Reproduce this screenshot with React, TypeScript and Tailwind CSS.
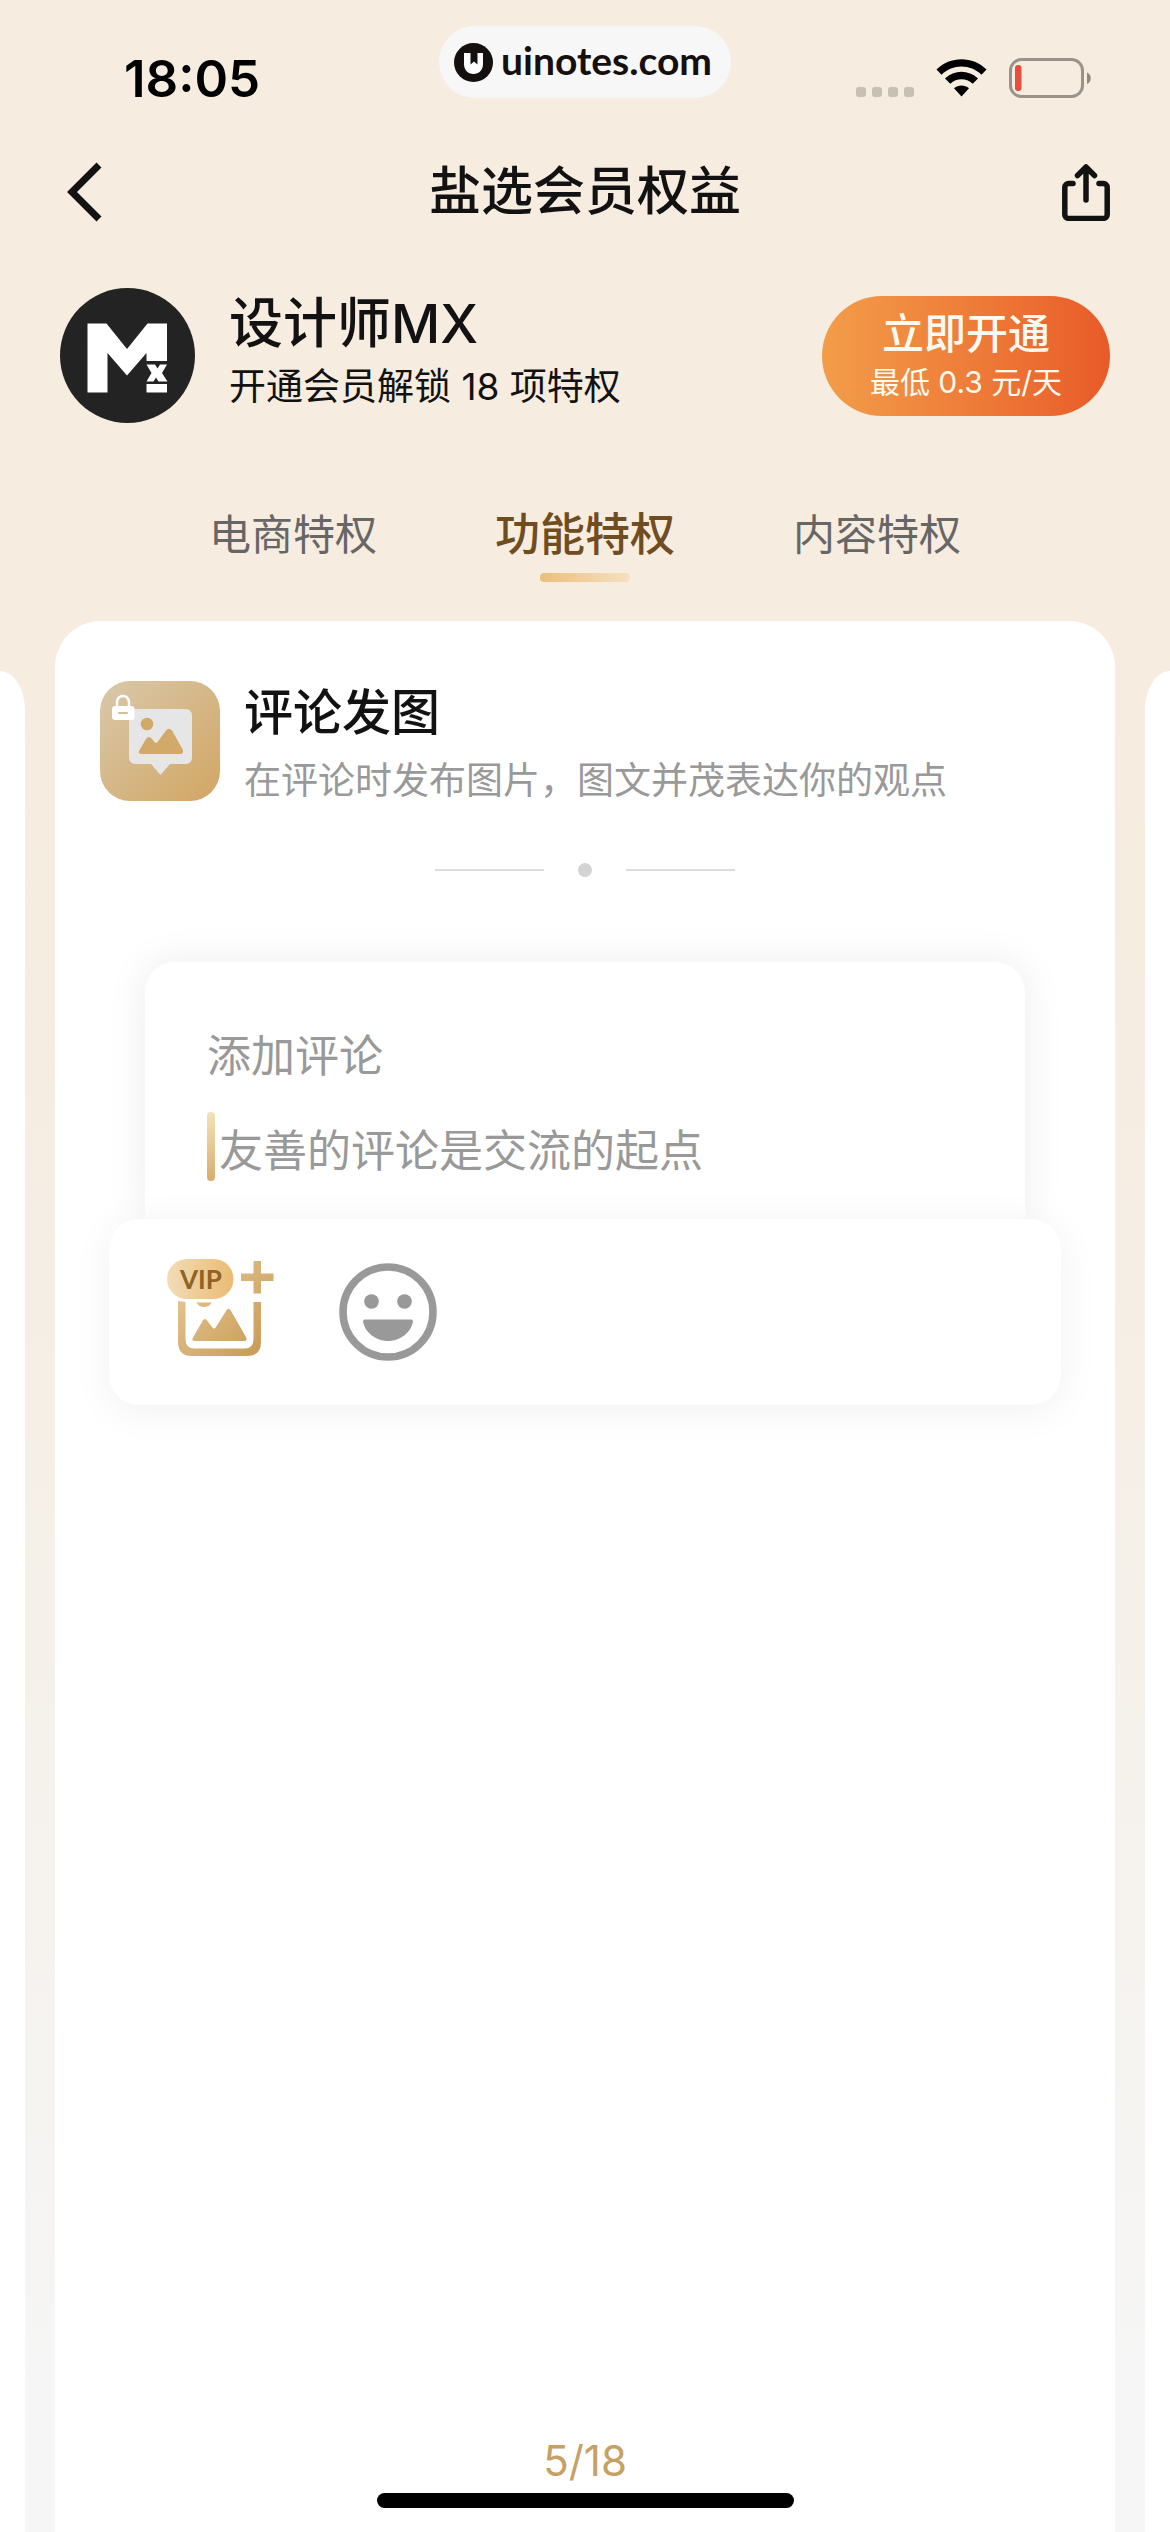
import React from 'react';

const tabs = [
  { label: '电商特权', active: false },
  { label: '功能特权', active: true },
  { label: '内容特权', active: false },
];

function StatusBar() {
  return (
    <div className="grid grid-cols-[1fr_auto_1fr] items-start pt-[26px]">
      <div className="flex h-[104px] items-center pl-[124px]">
        <span className="text-[51px] font-semibold leading-none text-black">18:05</span>
      </div>

      {/* Site badge */}
      <div className="flex h-[72px] w-[292px] items-center gap-2 rounded-full bg-[#f7f7f7] pl-[15px]">
        <svg className="h-[39px] w-[39px] shrink-0" viewBox="0 0 39 39">
          <circle cx="19.5" cy="19.5" r="19.5" fill="#15100f" />
          <path d="M10 10h6.500v11.500l3.500-3 3.500 3V10H29v11c0 6-4 10-9.500 10S10 27 10 21z" fill="#fff" />
        </svg>
        <span className="pb-1 font-['Lato'] text-[39px] font-bold leading-none text-[#15100f]">uinotes.com</span>
      </div>

      {/* Signal, wifi, battery */}
      <div className="flex h-[104px] items-center justify-end pr-[78px]">
        <div className="mt-7 flex gap-[6px]">
          <span className="h-[10px] w-[10px] rounded-[3px] bg-[#c6bfb2]" />
          <span className="h-[10px] w-[10px] rounded-[3px] bg-[#c6bfb2]" />
          <span className="h-[10px] w-[10px] rounded-[3px] bg-[#c6bfb2]" />
          <span className="h-[10px] w-[10px] rounded-[3px] bg-[#c6bfb2]" />
        </div>
        <svg className="ml-[22px] h-[38px] w-[51px]" viewBox="0 0 51 38">
          <path d="M0.500 10.500C14 -3.300 37 -3.300 50.500 10.500L45.500 15.800C34.500 4.800 16.500 4.800 5.500 15.800z" />
          <path d="M9 19.500c9.300-8.900 23.700-8.900 33 0l-5.300 5.200c-6.400-5.800-16-5.800-22.400 0z" />
          <path d="M18 29.300c4.400-3.700 10.600-3.700 15 0L25.500 37.500z" />
        </svg>
        <svg className="ml-[22px] h-[40px] w-[83px]" viewBox="0 0 83 40">
          <rect x="1.500" y="1.500" width="72" height="37" rx="11" fill="none" stroke="#9a9389" strokeWidth="3" />
          <rect x="6" y="7" width="6.500" height="26" rx="3" fill="#e74c3c" />
          <path d="M78 14.500c5 2 5 9.500 0 11.500z" fill="#8f897f" />
        </svg>
      </div>
    </div>
  );
}

function NavBar() {
  return (
    <header className="flex h-[124px] items-center justify-between px-[60px]">
      <button type="button" aria-label="返回" className="flex w-[50px] justify-start pl-[6px]">
        <svg className="h-[60px] w-[36px]" viewBox="0 0 36 60" fill="none" stroke="#121212" strokeWidth="7">
          <path d="M33 3L6 30l27 27" strokeLinecap="butt" strokeLinejoin="miter" />
        </svg>
      </button>
      <h1 className="text-[52px] font-medium leading-[64px] text-[#121212]">盐选会员权益</h1>
      <button type="button" aria-label="分享" className="flex w-[50px] justify-end">
        <svg className="h-[58px] w-[48px]" viewBox="0 0 48 58" fill="none" stroke="#121212" strokeWidth="5.500" strokeLinecap="round" strokeLinejoin="round">
          <path d="M11 20.500H6.500a3.700 3.700 0 0 0-3.700 3.700v27.500a3.700 3.700 0 0 0 3.700 3.700h35a3.700 3.700 0 0 0 3.700-3.700V24.200a3.700 3.700 0 0 0-3.700-3.700H37" />
          <path d="M24 37V5M15.500 12.500L24 4l8.500 8.500" />
        </svg>
      </button>
    </header>
  );
}

function Avatar() {
  return (
    <svg className="h-[135px] w-[135px] shrink-0" viewBox="0 0 135 135">
      <circle cx="67.500" cy="67.500" r="67.500" fill="#232323" />
      <path d="M27.500 35.500h19L67 61l20.500-25.500H107V73H86.500v-8L67 87.500 47.500 65v39.500h-20z" fill="#fff" />
      <path d="M86.500 76.500h8.500l2.500 4 2.500-4h7l-5 8.500 5.500 8.500h-9l-2.500-4-2.500 4h-7l5-8.500zM86.500 96H107v8.500H86.500z" fill="#fff" />
    </svg>
  );
}

function Profile() {
  return (
    <section className="flex items-center px-[60px] pt-[34px]">
      <Avatar />
      <div className="ml-[34px] flex-1 text-[#121212]">
        <p className="text-[54px] font-medium leading-[62px]">设计师MX</p>
        <p className="text-[37px] leading-[64px]">开通会员解锁 18 项特权</p>
      </div>
      <button
        type="button"
        className="flex h-[120px] w-[288px] flex-col items-center justify-center rounded-full bg-gradient-to-r from-[#f29d49] to-[#e85a29] pt-[2px] text-[#fffaf0]"
      >
        <span className="text-[42px] font-medium leading-[50px]">立即开通</span>
        <span className="text-[30px] leading-[46px]">最低 0.3 元/天</span>
      </button>
    </section>
  );
}

function Tabs() {
  return (
    <nav className="mt-20 flex justify-center gap-[118px]">
      {tabs.map((tab) => (
        <a
          key={tab.label}
          href="#"
          className={
            tab.active
              ? 'flex flex-col items-center text-[45px] font-medium leading-[64px] text-[#704d20]'
              : 'text-[42px] leading-[64px] text-[#666]'
          }
        >
          {tab.label}
          {tab.active && <span className="mt-[6px] h-[9px] w-[90px] rounded bg-gradient-to-r from-[#ebbf7b] to-[#f5e1c0]" />}
        </a>
      ))}
    </nav>
  );
}

function FeatureIcon() {
  return (
    <svg className="h-[120px] w-[120px] shrink-0" viewBox="0 0 120 120">
      <defs>
        <linearGradient id="tile" x1="0" y1="0" x2="1" y2="1">
          <stop offset="0" stopColor="#d9c8ab" />
          <stop offset="1" stopColor="#d2a663" />
        </linearGradient>
      </defs>
      <rect width="120" height="120" rx="30" fill="url(#tile)" />
      <path d="M35 28h51a6 6 0 0 1 6 6v43a6 6 0 0 1-6 6H70L60.500 94 51 83H35a6 6 0 0 1-6-6V34a6 6 0 0 1 6-6z" fill="#e6e6e6" />
      <circle cx="47" cy="43" r="6.300" fill="#d2a968" />
      <path d="M39.500 69L46 58q3-4 6 0l2.500 3q1.500 2 3 0L66 49.500q3-3.500 6 0L82.500 68q2 5-2.500 5H42q-5 0-2.500-4z" fill="#d2a968" />
      <path d="M17 26v-5a6 6 0 0 1 12 0v5" fill="none" stroke="#fff" strokeWidth="2.500" />
      <rect x="12" y="25" width="22.500" height="14" rx="3" fill="#fff" />
      <rect x="18" y="31" width="10" height="2" rx="1" fill="#d9bd92" />
    </svg>
  );
}

function VipImageIcon() {
  return (
    <svg className="h-[106px] w-[108px]" viewBox="0 0 108 106">
      <defs>
        <linearGradient id="gold" gradientUnits="userSpaceOnUse" x1="11" y1="20" x2="94" y2="97">
          <stop offset="0" stopColor="#e6c795" />
          <stop offset="1" stopColor="#c79b56" />
        </linearGradient>
        <linearGradient id="badge" x1="0" y1="0" x2="1" y2="0">
          <stop offset="0" stopColor="#f2dcb8" />
          <stop offset="1" stopColor="#eabb73" />
        </linearGradient>
      </defs>
      <path d="M11 42l7.500 1v37.500q0 9 9 9h50q9 0 9-9V43H94v40q0 14-14 14H25q-14 0-14-14z" fill="url(#gold)" />
      <path d="M29.500 43.500h15c-3 6-12 6-15 0z" fill="url(#gold)" />
      <path d="M26 78.500L35.500 62q2.500-4 5 0l4.500 6q2 3 4 0L59 52q2.500-4.500 5 0l15 26q2 4-2 4H28q-4 0-2-3.500z" fill="url(#gold)" />
      <path d="M86.500 2H94v12.500h12.500V22H94v12.500h-7.500V22H74v-7.500h12.500z" fill="url(#gold)" />
      <rect width="66.500" height="40" rx="20" fill="url(#badge)" />
      <text x="34" y="30" textAnchor="middle" className="font-['Lato'] text-[26px] font-bold" fill="#8f6225">VIP</text>
    </svg>
  );
}

function SmileIcon() {
  return (
    <svg className="h-[98px] w-[98px]" viewBox="0 0 98 98" fill="#999">
      <circle cx="49" cy="49" r="45" fill="none" stroke="#999" strokeWidth="7.500" />
      <circle cx="32.500" cy="38.500" r="7.300" />
      <circle cx="65.500" cy="38.500" r="7.300" />
      <path d="M26 56.500h46q2 0 2 2c-2 11-13 19.500-25 19.500S26 69.500 24 58.500q0-2 2-2z" />
    </svg>
  );
}

function CommentPreview() {
  return (
    <div className="mt-[85px]">
      <div className="mx-[90px] rounded-t-[30px] bg-white px-[62px] pb-[38px] pt-[62px] shadow-[0_0_40px_rgba(0,0,0,0.08)]">
        <label htmlFor="comment" className="block text-[44px] leading-[64px] text-[#999]">
          添加评论
        </label>
        <div className="mt-6 flex h-[69px] items-stretch gap-1">
          <span className="w-2 shrink-0 rounded-full bg-gradient-to-b from-[#f2e3b9] to-[#d8ab6c]" />
          <input
            id="comment"
            type="text"
            placeholder="友善的评论是交流的起点"
            className="min-w-0 flex-1 bg-transparent pt-2 text-[44px] text-[#999] outline-none placeholder:text-[#999]"
          />
        </div>
      </div>
      <div className="relative mx-[54px] flex items-center gap-[64px] rounded-[30px] bg-white px-[58px] py-10 shadow-[0_6px_40px_rgba(0,0,0,0.06)]">
        <button type="button" aria-label="添加图片">
          <VipImageIcon />
        </button>
        <button type="button" aria-label="表情">
          <SmileIcon />
        </button>
      </div>
    </div>
  );
}

export default function App() {
  return (
    <div className="flex min-h-screen flex-col overflow-hidden bg-[linear-gradient(to_bottom,#f6ecdf_0%,#f6ecdf_28%,#f5eee4_50%,#f6f6f6_95%)] font-['Inter','Noto_Sans_CJK_SC',sans-serif]">
      <StatusBar />
      <NavBar />
      <Profile />
      <Tabs />

      {/* Privilege carousel, neighbours peek in from both sides */}
      <main className="mt-[39px] flex flex-1 items-stretch gap-[30px]">
        <div className="mt-[50px] w-[25px] shrink-0 bg-white [border-top-right-radius:28px_44px]" />
        <article className="flex min-w-0 flex-1 flex-col rounded-t-[46px] bg-white">
          <div className="flex items-start px-[45px] pt-[60px]">
            <FeatureIcon />
            <div className="ml-6">
              <h2 className="text-[49px] font-medium leading-[64px] text-[#121212]">评论发图</h2>
              <p className="mt-1 text-[37px] leading-[64px] text-[#999]">在评论时发布图片，图文并茂表达你的观点</p>
            </div>
          </div>

          <div className="mt-[50px] flex items-center justify-center gap-[34px]">
            <span className="h-[2px] w-[109px] bg-[#dcdcdc]" />
            <span className="h-[14px] w-[14px] rounded-full bg-[#d3d3d3]" />
            <span className="h-[2px] w-[109px] bg-[#dcdcdc]" />
          </div>

          <CommentPreview />

          <p className="mt-auto text-center text-[42px] leading-[64px] text-[#c6a064]">5/18</p>
          <div className="mx-auto mb-6 h-[15px] w-[417px] rounded-full bg-black" />
        </article>
        <div className="mt-[50px] w-[25px] shrink-0 bg-white [border-top-left-radius:28px_44px]" />
      </main>
    </div>
  );
}
